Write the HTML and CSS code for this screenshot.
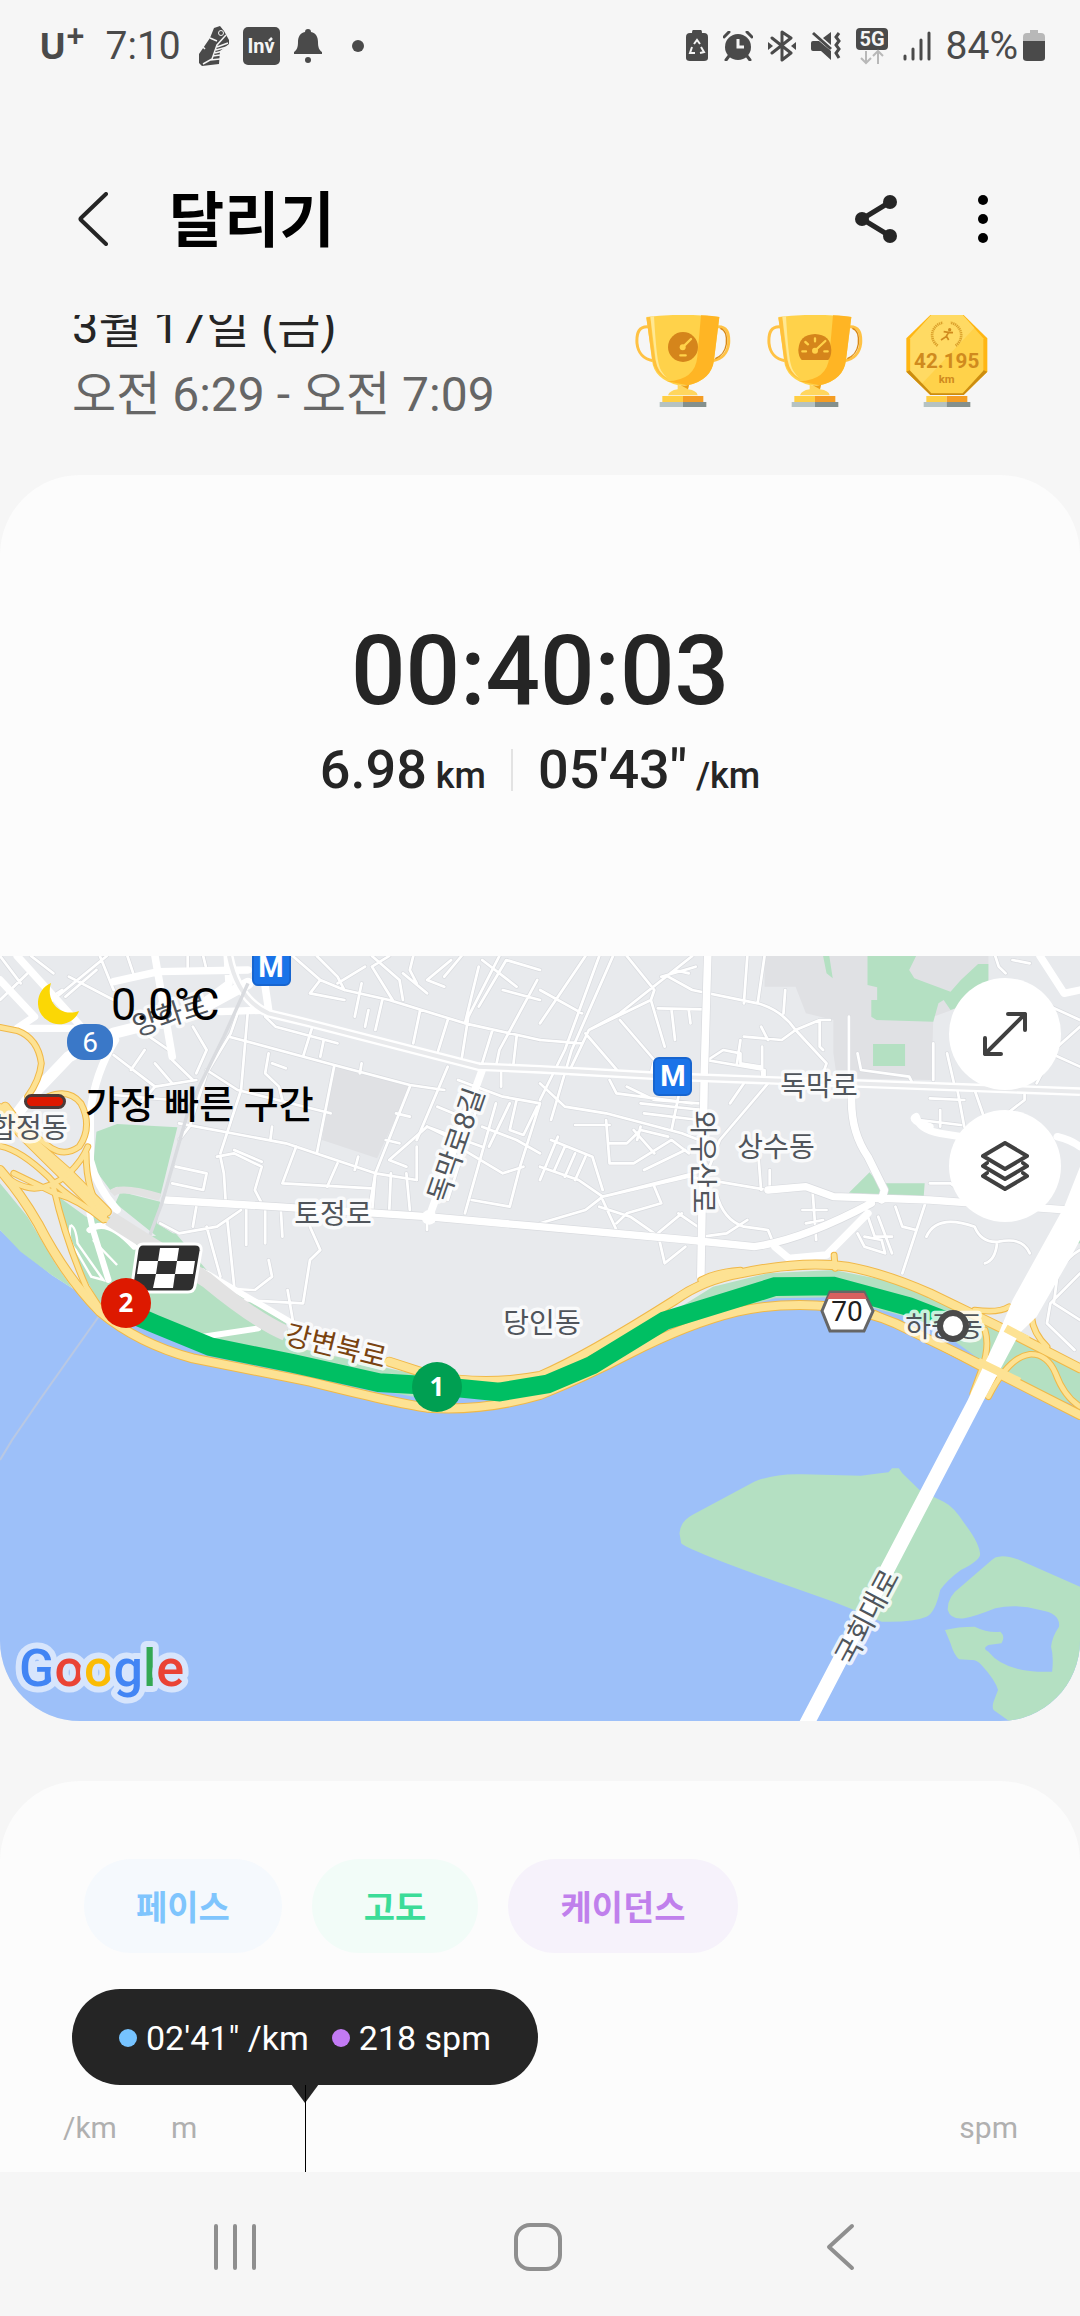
FILE: index.html
```html
<!DOCTYPE html>
<html lang="ko">
<head>
<meta charset="utf-8">
<meta name="viewport" content="width=device-width, initial-scale=1">
<title>달리기</title>
<link rel="stylesheet" href="styles.css">
</head>
<body>
<div class="status-bar">
  <div class="status-group status-left">
    <span class="carrier">U<sup class="carrier-plus">+</sup></span>
    <span class="status-text clock">7:10</span>
    <svg class="icon" width="32" height="40" viewBox="0 0 32 40" aria-hidden="true">
      <path d="M1 28 L12 12 L16 2 L22 0 L26 5 L31 14 L31 18 L22 25 L21 38 L4 40 L1 37Z" fill="#4a4a4a"/>
      <path d="M28 9 L19 19 L14 33 L5 38 M30 17 L19 21 M29 21 L18 24 M25 25 L17 27 M22 29 L15 30 M22 33 L12 34 M3 19 L7 23 M12 12 L19 15" fill="none" stroke="#f5f5f5" stroke-width="1.5"/>
      <circle cx="23" cy="7" r="2.500" fill="none" stroke="#f5f5f5"/>
    </svg>
    <svg class="icon" width="37" height="38" viewBox="0 0 37 38" role="img" aria-label="Inv">
      <rect width="37" height="38" rx="5" fill="#4a4a4a"/>
      <text x="18" y="26" class="inv">Inv</text>
      <path d="M26 14 l3 -3" stroke="#f5f5f5" stroke-width="2.500"/>
    </svg>
    <svg class="icon" width="30" height="34" viewBox="0 0 30 34" aria-hidden="true">
      <path d="M15 0 C17 0 18 1 18 3 C23 4 25 8 25 13 C25 18 26 21 29 23 V25 H1 V23 C4 21 5 18 5 13 C5 8 7 4 12 3 C12 1 13 0 15 0Z" fill="#4a4a4a"/>
      <circle cx="15" cy="31" r="3" fill="#4a4a4a"/>
    </svg>
    <span class="more-dot"></span>
  </div>
  <div class="status-group status-right">
    <svg class="icon" width="22" height="32" viewBox="0 0 22 32" aria-hidden="true">
      <path d="M7 0 H15 Q16 0 16 3 H18 Q22 3 22 7 V28 Q22 31 18 31 H4 Q0 31 0 28 V7 Q0 3 4 3 H6 Q6 0 7 0Z" fill="#4a4a4a"/>
      <path d="M8 14 L11 10 L14 14 M15 17 L18 22 L14 23 M9 23 H4 L6 17" fill="none" stroke="#f5f5f5" stroke-width="2"/>
    </svg>
    <svg class="icon" width="30" height="30" viewBox="0 0 30 30" aria-hidden="true">
      <circle cx="15" cy="16" r="13" fill="#4a4a4a"/>
      <path d="M1 6 L6 1 M29 6 L24 1 M6 25 L3 29 M24 25 L27 29" stroke="#4a4a4a" stroke-width="3" stroke-linecap="round"/>
      <path d="M15 8 V16 H21" fill="none" stroke="#f5f5f5" stroke-width="3"/>
    </svg>
    <svg class="icon" width="28" height="32" viewBox="0 0 28 32" aria-hidden="true">
      <path d="M4 8 L23 23 L14 30 V2 L23 8 L4 23" fill="none" stroke="#4a4a4a" stroke-width="3" stroke-linejoin="round" stroke-linecap="round"/>
      <path d="M0 12 L5 16 L0 20Z M28 12 L23 16 L28 20Z" fill="#4a4a4a"/>
    </svg>
    <svg class="icon" width="30" height="30" viewBox="0 0 30 30" aria-hidden="true">
      <path d="M0 12 Q0 10 2 10 H8 L20 20 V29 L10 20 H2 Q0 20 0 18Z M20 1 V14 L12 7Z" fill="#4a4a4a"/>
      <path d="M2 2 L20 18 M28 2 L25 6 L28 10 L25 14 L28 18 L25 22 L28 27" fill="none" stroke="#4a4a4a" stroke-width="3"/>
    </svg>
    <svg class="icon" width="32" height="38" viewBox="0 0 32 38" role="img" aria-label="5G">
      <rect y="1" width="32" height="22" rx="4" fill="#4a4a4a"/>
      <text x="16" y="19" class="five-g">5G</text>
      <path d="M10 24 V36 M5 31 L10 36 L15 31 M22 37 V25 M17 29 L22 24 L27 29" fill="none" stroke="#b8b8b8" stroke-width="2"/>
    </svg>
    <svg class="icon" width="28" height="30" viewBox="0 0 28 30" aria-hidden="true">
      <path d="M2 25 V28 M10 18 V28 M18 9 V28 M26 2 V28" stroke="#4a4a4a" stroke-width="3" stroke-linecap="round"/>
    </svg>
    <span class="battery">
      <span class="status-text">84%</span>
      <svg class="icon" width="22" height="32" viewBox="0 0 22 32" aria-hidden="true">
        <path d="M7 0 H15 V3 H18 Q22 3 22 7 V12 H0 V7 Q0 3 4 3 H7Z" fill="#b8b8b8"/>
        <path d="M0 11 H22 V28 Q22 31 18 31 H4 Q0 31 0 28Z" fill="#4a4a4a"/>
      </svg>
    </span>
  </div>
</div>

<header class="app-bar">
  <button class="icon-button" aria-label="뒤로">
    <svg width="30" height="54" viewBox="0 0 30 54"><path d="M28 2 L3 26 Q2 27 3 28 L28 52" fill="none" stroke="#252525" stroke-width="4" stroke-linecap="round" stroke-linejoin="round"/></svg>
  </button>
  <h1 class="title">달리기</h1>
  <button class="icon-button share" aria-label="공유">
    <svg width="44" height="50" viewBox="0 0 44 50"><path d="M36 8 L8 25 L36 42" fill="none" stroke="#252525" stroke-width="5"/><circle cx="36" cy="8" r="7" fill="#252525"/><circle cx="8" cy="25" r="7" fill="#252525"/><circle cx="36" cy="42" r="7" fill="#252525"/></svg>
  </button>
  <button class="icon-button" aria-label="더보기">
    <svg width="10" height="50" viewBox="0 0 10 50"><circle cx="5" cy="6" r="5"/><circle cx="5" cy="25" r="5"/><circle cx="5" cy="44" r="5"/></svg>
  </button>
</header>

<main class="content">
  <section class="summary">
    <div class="when">
      <p class="date">3월 17일 (금)</p>
      <p class="time-range">오전 6:29 - 오전 7:09</p>
    </div>
    <div class="awards">
      <svg width="96" height="92" viewBox="104 495 288 276" role="img" aria-label="최고 기록">
        <defs>
          <g id="cup">
            <path d="M150 531 C115 525 108 550 110 580 C113 608 130 628 158 632 M345 531 C380 525 387 550 385 580 C382 608 365 628 337 632" fill="none" stroke="#ffc244" stroke-width="9"/>
            <path d="M360 535 C376 540 380 560 378 582 C374 608 362 618 345 626" fill="none" stroke="#d98914" stroke-width="4"/>
            <path d="M138 501 Q248 488 357 501 L341 630 Q334 690 262 706 Q248 708 234 706 Q160 688 155 630Z" fill="#ffd24a"/>
            <path d="M302 496 Q340 498 357 501 L341 630 Q334 690 262 706 L200 694 Q285 690 291 620Z" fill="#ffb524"/>
            <path d="M138 503 L150 500 Q160 620 168 640 Q175 670 205 690 Q162 670 156 630Z" fill="#ffc03c"/>
            <path d="M150 500 L161 499 Q168 620 176 645 Q180 665 200 683 Q172 668 166 630Z" fill="#ffe893"/>
            <path d="M232 704 Q248 710 266 704 L263 718 Q290 722 292 736 H203 Q207 722 232 718Z" fill="#ffd65e"/>
            <path d="M240 705 Q252 710 266 704 L263 718Z" fill="#eda018"/>
            <path d="M186 738 H248 V756 H186Z" fill="#ffce43"/><path d="M248 738 H309 V756 H248Z" fill="#f49d24"/>
            <path d="M178 756 H248 V771 H178Z" fill="#b5c2c2"/><path d="M248 756 H318 V771 H248Z" fill="#84908d"/>
          </g>
        </defs>
        <use href="#cup"/>
        <circle cx="248" cy="591" r="45" fill="#d5851b"/>
        <circle cx="247" cy="592" r="9" fill="#ffd24a"/>
        <path d="M249 590 L272 567 M240 616 H256" stroke="#ffd24a" stroke-width="7" stroke-linecap="round"/>
      </svg>
      <svg width="96" height="92" viewBox="104 495 288 276" role="img" aria-label="최고 속도">
        <use href="#cup"/>
        <path d="M208 630 Q198 618 198 600 Q200 554 248 552 Q295 554 297 600 Q297 618 288 630Z" fill="#d5851b"/>
        <circle cx="248" cy="602" r="9" fill="#ffd24a"/>
        <path d="M250 600 L279 573 M248 565 V574 M219 576 L227 583 M210 604 H221 M276 604 H286" stroke="#ffd24a" stroke-width="7" stroke-linecap="round"/>
      </svg>
      <svg width="96" height="92" viewBox="896 495 288 276" role="img" aria-label="42.195 km">
        <path d="M978 738 H1039 V756 H978Z" fill="#ffce43"/><path d="M1039 738 H1101 V756 H1039Z" fill="#f49d24"/>
        <path d="M970 756 H1039 V771 H970Z" fill="#b5c2c2"/><path d="M1039 756 H1110 V771 H1039Z" fill="#84908d"/>
        <path d="M990 495 H1090 L1161 565 V665 L1090 735 H990 L918 665 V565Z" fill="#ffb613"/>
        <path d="M918 665 L990 735 H1090 L1161 665 L1148 660 L1086 728 H994 L930 660Z" fill="#cc8d10"/>
        <path d="M993 495 H1087 L1149 565 V662 L1087 730 H993 L930 662 V565Z" fill="#ffd24a"/>
        <path d="M993 495 H1087 L1122 534 L966 700 L930 662 V565Z" fill="#ffda63"/>
        <path d="M1012 587 A38 38 0 0 1 1028 518 M1066 587 A38 38 0 0 0 1050 518" fill="none" stroke="#dba12c" stroke-width="8" stroke-dasharray="4 2"/>
        <path d="M1030 545 L1045 547 L1037 560 L1022 570 M1045 547 L1058 548 M1038 558 L1045 570" fill="none" stroke="#d08a1e" stroke-width="5"/>
        <circle cx="1048" cy="539" r="5" fill="#d08a1e"/>
        <text x="1039" y="654" class="award-number">42.195</text>
        <text x="1039" y="699" class="award-unit">km</text>
      </svg>
    </div>
  </section>

  <section class="card result">
    <div class="totals">
      <p class="duration">00:40:03</p>
      <p class="stats">
        <span class="stat">6.98<small class="unit"> km</small></span>
        <span class="divider"></span>
        <span class="stat">05'43"<small class="unit"> /km</small></span>
      </p>
    </div>
    <div class="map">
      <svg class="map-canvas" viewBox="0 0 1080 765" role="img" aria-label="달린 경로 지도">
        <defs>
          <g id="highways">
            <path d="M0 690 Q60 760 110 850 Q190 1010 290 1115 Q400 1210 560 1255 L900 1325 Q1150 1390 1240 1403 Q1400 1415 1568 1365 Q1700 1310 1830 1240 Q2000 1150 2140 1115 Q2270 1085 2420 1100 Q2520 1115 2600 1150 L2860 1280 L3136 1425"/>
            <path d="M1130 1265 L1250 1305 Q1400 1340 1568 1308 Q1700 1250 1960 1080 Q2040 1020 2150 1000 Q2330 960 2460 980 Q2568 1000 2700 1060 L2900 1160 L3136 1285"/>
            <path d="M0 505 L60 580 L300 825 M15 500 L90 600 L200 700 L310 815"/>
          </g>
          <g id="ramps">
            <path d="M0 262 L50 272 Q110 295 120 370 Q115 420 80 470 M140 470 Q200 445 235 490 Q270 560 230 620 Q190 650 150 625 L40 540"/>
            <path d="M0 618 Q60 630 140 710 Q180 760 310 840 M255 620 Q240 660 200 700 Q150 745 100 745 Q40 740 0 690 M250 640 Q250 760 300 820 M155 740 Q190 900 250 1040 L300 1120 M40 700 L160 760 Q230 780 300 840"/>
            <path d="M2425 985 L2422 945 M2035 1020 Q2080 995 2150 990 M2930 1100 Q2900 1120 2830 1110 M2860 1170 Q2875 1220 2850 1290 L2825 1360 M2870 1370 Q2930 1250 2990 1243 Q3040 1240 3065 1300 Q3090 1370 3136 1400 M2995 1130 Q3000 1180 3040 1220 M2540 1120 L2640 1170 L2860 1290"/>
          </g>
          <g id="minor">
            <path d="M0 180 L90 90 M90 48 L155 100 M130 200 L310 48 M190 170 L280 90 M200 110 L330 180 M290 48 L330 150 M370 48 L390 110 M545 48 V90 M590 48 L600 90 M0 48 L60 130 M120 190 L180 150"/>
            <path d="M330 345 L450 440 L570 420 M380 390 L420 330 M420 280 L490 330 M450 370 L500 430 M500 360 L560 420 M560 260 L600 330 L570 400 M690 220 L670 280 L600 400 L550 560 L520 600 M720 210 L700 450 L640 640 M770 230 L800 260 L980 310"/>
            <path d="M330 465 L500 480 M450 440 L400 500 M665 290 L970 375 L1190 435 L1290 450 M600 390 L690 450 L960 520 M780 340 L770 400 L810 440 L820 480 M790 370 L830 385 M520 550 L830 610 L1090 700 L1210 720 M970 380 L920 640 M1190 440 L1090 700 L1070 820 M1300 380 L1210 600 M910 250 L880 350 M940 300 L930 350 M1050 370 L1045 400"/>
            <path d="M850 48 L930 120 L1000 150 L1130 180 L1350 250 L1568 300 M920 48 L980 110 L1000 150 M1060 80 L980 130 M1130 48 L1080 80 L1140 180 M1080 48 L1160 120 L1170 180 M1200 48 L1190 90 L1210 130 M1310 60 L1240 120 L1290 140 M1340 48 L1290 110 M1390 80 L1350 250 M1450 48 L1360 230 L1340 360 M1568 90 L1470 60 L1390 200 M1568 180 L1460 150 M1560 120 L1450 330 L1440 380 M1000 180 L900 160 L930 120 M1050 130 L1030 230 M1070 210 L1060 260 M1110 180 L1090 270 M1220 210 L1200 310 M1300 240 L1270 340 M1430 270 L1400 370 M1500 290 L1490 380 M1170 100 L1240 160 M1400 60 L1500 140"/>
            <path d="M510 680 L600 700 L590 750 L500 730 M630 650 L680 640 L760 680 L740 750 L765 800 M680 630 L760 665 M860 620 L820 730 L1080 745 M980 670 L950 740 M640 650 L650 700 L655 780 M1090 700 L1080 820 M1135 700 L1130 820 M1180 700 L1190 810 M1240 560 L1130 660 L1180 680 M1120 600 L1160 610 M1150 520 L1190 530 M1210 620 L1210 720 M1040 650 L1030 690 M790 560 L785 600"/>
            <path d="M465 850 L520 880 L630 860 L700 810 M570 800 L560 860 M600 860 L640 1010 M660 840 L680 1040 M715 800 V915 M770 805 V910 M815 800 L820 890 M590 990 L700 1080 L880 1090 L900 960 L930 930 L900 860 M780 960 L790 1010 L740 1050 L640 1045 M835 1050 L850 1140 M1240 840 L1240 870"/>
            <path d="M1330 420 L1460 470 L1568 490 M1400 560 L1500 600 L1568 640 M1380 520 L1300 780 M1440 490 L1350 820 M1480 490 L1420 620 M1500 480 L1480 570 L1520 585 L1560 500 M1568 490 L1510 680 L1480 800 L1370 780 M1455 390 V440 M1270 500 L1340 530 M1330 620 L1460 700 L1520 680 M1240 560 L1400 620 M1240 560 L1300 590"/>
            <path d="M1568 250 L1700 48 M1568 480 L1640 330 L1740 48 M1600 540 L1660 330 L1780 48 M1568 150 L1690 220 M1568 300 L1690 310 M1650 400 L1710 270 L1800 220 L2010 48 M1710 270 L1890 180 L1900 150 L1820 48 M1800 240 L1900 360 L1890 400 M1700 280 L1800 400 M1890 180 L1930 320 M1910 205 L2040 208 M1940 110 L2010 150 L2200 190 Q2270 210 2310 270 L2400 370 L2390 400 M2020 80 L1920 110 M1960 90 L2000 100 M1950 210 L1960 300 M2000 210 L2005 250 M2220 48 L2200 190 M2170 48 L2160 190 M2280 150 L2275 220 M2310 270 L2380 240 H2410 M2380 240 L2380 320 L2390 330 M2465 230 V410 M2160 290 L2270 300 L2310 270 M2210 260 L2230 300 M2055 360 L2100 330 L2150 340 L2150 370 L2210 380 M2150 300 L2140 370 M2050 360 L2220 390 L2220 420 M2213 320 V410"/>
            <path d="M1568 430 L1640 500 L1760 520 L1980 580 L2030 600 M1770 420 L1790 460 L2010 490 M1820 440 L1900 480 L2030 490 M1860 490 L2040 510 M1870 520 L2030 540 M1970 470 L1950 570 M1760 540 L1770 670 L1840 670 L1950 600 L2000 640 M1670 555 L1770 555 M1770 610 H1820 L1860 570 L1940 590 M1860 560 L1850 600 M1870 690 L1990 630 M1840 570 L1900 640 M1568 720 L1620 590 M1568 680 L1680 720 L1750 770 L2050 690 M1600 600 L1720 650 L1750 750 M1640 620 L1610 690 M1670 640 L1640 710 M1700 650 L1670 720 M1568 850 L1700 810 L1750 770 L2000 710 L2230 750 M1750 780 L1790 870 M1740 800 L1830 830 L1900 880 M1900 740 L1920 790 L1820 820 L1790 850 M1980 820 L1910 880 L1930 970 L1990 920 M1970 820 L2040 870 M2080 760 Q2100 840 2160 860 L2230 870 L2250 920 M2040 890 L2110 880 L2170 840 M2200 620 L2210 750 M2235 690 V750 M2360 760 L2370 900 M2330 810 H2400 M2340 850 L2390 840 M2230 430 L2090 600 L2060 680 M2160 430 L2120 490"/>
            <path d="M2490 340 L2500 390 L2640 410 L2650 430 M2710 310 V420 M2750 340 L2770 430 M2890 48 L2900 80 L2920 100 M2940 60 L2990 70 M3136 380 L3050 340 M3010 430 L3060 330 L3136 260 M3030 190 L3136 240 M2700 475 L2800 480 M2780 450 L2800 560 M2830 450 L2860 540 M2975 460 V480 L2900 540 M2670 540 L2790 555 M2730 510 V560 M2690 780 L2620 1000 M2700 730 H2760 L2800 760 M2550 830 L2590 940 M2520 830 L2540 890 H2590 M2600 800 L2620 860 L2660 870 M2490 880 L2510 920 L2570 940 L2560 900 L2510 890 M2690 890 Q2720 820 2830 860 Q2850 910 2900 905 Q2970 890 2990 940 M2895 910 Q2890 960 2860 970 M3136 930 Q3080 960 3010 1100 M3136 1000 L3050 1090 L3040 1150 L3120 1230 M3070 1010 L3060 1090 L3136 1140"/>
          </g>
        </defs>
        <g transform="scale(.34439 .33333) translate(0 -48)">
          <path d="M0 0 H3136 V2343 H0Z" fill="#e8eaed"/>
          <path d="M970 378 L1190 440 L1095 655 L935 600Z M2220 48 H2870 V170 L2710 230 L2705 420 L2430 415 L2420 340 V240 L2340 220 L2310 140 L2220 140Z" fill="#e0e1e4"/>
          <path d="M0 870 L60 930 L150 1005 L210 1045 L300 1110 L430 1150 L620 1240 L830 1290 L1100 1350 L1450 1370 L1568 1350 L1730 1290 L1930 1150 L2250 1060 L2420 1060 L2700 1150 L2860 1250 L3136 1370 V2343 H0Z" fill="#9dc0f9"/>
          <g fill="#b4e0c2">
            <path d="M0 730 L80 830 L160 970 L210 1045 L150 1005 L60 935 L0 870Z"/>
            <path d="M170 770 L250 830 L330 830 L430 890 L510 880 L600 990 L830 1150 L850 1220 L1150 1290 L1300 1320 L1200 1370 L1100 1350 L620 1240 L430 1150 L300 1110 L240 1000 L190 860Z"/>
            <path d="M280 575 L340 552 L515 562 L465 770 L340 740 L320 750 L270 680Z M335 790 L350 755 L465 785 L455 850 L510 885 L480 910Z"/>
            <path d="M1900 1150 L2070 1040 L2230 1000 L2420 990 L2568 1020 L2850 1130 L3136 1300 V1400 L2940 1330 L2860 1270 L2700 1150 L2420 1072 L2250 1075 L1950 1160Z"/>
            <path d="M2519 48 H2660 L2640 90 L2655 115 L2760 155 L2790 120 L2840 72 H2870 V170 L2760 210 L2740 180 L2725 190 L2710 245 L2545 240 L2530 230 V180 H2547 V142 L2519 135Z M2535 312 H2628 V378 H2535Z M2390 48 H2408 L2418 115 L2400 100Z M2465 758 L2525 697 L2550 730 H2685 L2682 772Z M3136 860 L3120 910 H3136Z"/>
            <path d="M1973 1780 Q1975 1745 2010 1725 L2190 1625 Q2250 1600 2330 1603 L2500 1607 Q2560 1600 2580 1597 L2590 1585 L2610 1585 L2620 1600 L2670 1650 L2740 1685 Q2770 1700 2800 1750 Q2845 1810 2846 1845 Q2840 1865 2790 1890 Q2750 1920 2730 1950 Q2715 2020 2690 2030 Q2650 2048 2560 2045 L2480 2010 L2420 1985 L2200 1905 Q2000 1830 1978 1810Z"/>
            <path d="M2900 1850 Q2920 1845 2960 1860 L3136 1940 V2343 H2930 L2885 2310 Q2880 2300 2885 2285 L2898 2250 Q2890 2220 2850 2175 Q2835 2158 2820 2160 L2785 2158 Q2770 2145 2760 2110 L2744 2070 Q2780 2060 2830 2060 Q2870 2080 2905 2075 Q2920 2090 2908 2110 L2870 2115 Q2850 2125 2870 2135 Q2920 2200 3055 2195 Q3060 2150 3052 2120 Q3055 2090 3075 2060 Q3080 2020 3020 2010 Q2950 1990 2890 2005 Q2830 2030 2800 2035 Q2760 2040 2752 2010 Q2750 1970 2790 1940 L2880 1860 Q2890 1850 2900 1850Z"/>
          </g>
          <use href="#minor" class="minor-edge"/>
          <use href="#minor" class="minor-road"/>
          <path class="major-edge" d="M480 780 L800 800 L1240 830 L1568 860 L2000 900 L2190 920 Q2330 900 2530 790 M2055 48 L2045 400 L2035 1010 M2476 430 Q2460 560 2520 650 L2568 750 L2560 780 M2230 750 L2340 740 L2420 770 L2700 780 L3100 810"/>
          <g class="major-road">
            <path d="M0 590 L80 480 L200 350 L330 280 L560 220 L720 130" stroke-width="34"/>
            <path d="M50 48 L240 265 H50 L100 230 L0 120 M330 125 L460 95 L720 90 M450 48 L500 350 M660 48 L665 130 L600 180 M770 140 L780 210 L640 215 M335 300 Q275 400 262 520 L262 660 Q280 740 340 810"/>
            <path d="M480 780 L800 800 L1240 830 L1568 860 L2000 900 L2190 920 Q2330 900 2530 790 M1400 390 L1250 820 M2055 48 L2045 400 L2035 1010 M2476 430 Q2460 560 2520 650 L2568 750 L2560 780 M2230 750 L2340 740 L2420 770 L2700 780 L3100 810 M2250 920 L2290 955 L2400 945 L2520 820 M3020 48 L3090 160 L3136 150 M2700 560 Q2640 540 2660 530 Q2670 570 2730 580 L2790 590 M3070 590 Q3110 600 3136 620"/>
            <path d="M260 820 L270 870 L315 1020 M260 870 Q310 830 390 920 M590 1190 L750 1165 M600 1000 L850 1150" stroke-width="18"/>
            <circle cx="1246" cy="832" r="22" fill="#fff" stroke="none"/>
          </g>
          <path d="M205 855 Q195 900 220 930 L265 1010 L300 1020 L225 910 Q220 860 205 855 M270 900 L340 975" fill="none" stroke="#fff" stroke-width="7"/>
          <path d="M665 48 Q690 180 780 220 L900 250 L1390 380 L1568 388 L1950 410 L3136 455" fill="none" stroke="#fff" stroke-width="26"/>
          <path d="M665 48 Q690 180 780 220 L900 250 L1390 380 L1568 388 L1950 410 L3136 455" fill="none" stroke="#e9eaec" stroke-width="12"/>
          <path d="M720 130 L650 290 L550 500 L470 790 L430 900" fill="none" stroke="#d9dbdf" stroke-width="10"/>
          <path d="M325 760 Q350 735 465 772" fill="none" stroke="#e2e2e2" stroke-width="22"/>
          <path d="M300 1110 L115 1380 L35 1500 L0 1560" fill="none" stroke="#b9c8e3" stroke-width="6"/>
          <use href="#highways" class="highway-edge"/>
          <use href="#ramps" class="ramp-edge"/>
          <use href="#highways" class="highway"/>
          <use href="#ramps" class="ramp"/>
          <path d="M318 835 L600 1020 Q740 1140 830 1180" fill="none" stroke="#e2e2e2" stroke-width="46"/>
          <path d="M2322 2343 L2810 1380 L2900 1180 L2940 1080 L3090 800 L3136 680 V900 L3110 950 L3010 1130 L2960 1180 L2857 1380 L2371 2343Z" fill="#fff"/>
          <path d="M2840 1265 L2960 1325 M2920 1165 L2985 1200" stroke="#fde293" stroke-width="24"/>
          <path d="M400 1130 L450 1152 L610 1220 L850 1270 L1100 1328 L1270 1338 L1450 1356 L1590 1332 L1720 1275 L1930 1142 L2250 1040 L2420 1038 L2640 1100 L2766 1150" fill="none" stroke="#00bf63" stroke-width="56"/>
        </g>
        <g class="map-labels">
          <text transform="translate(170 59) rotate(-18)" y="10">양화로</text>
          <text x="29" y="182">합정동</text>
          <text transform="translate(456 189) rotate(-71)" y="10">독막로8길</text>
          <text x="333" y="268">토정로</text>
          <text x="542" y="377">당인동</text>
          <text x="776" y="201">상수동</text>
          <text x="819" y="140">독막로</text>
          <text transform="translate(703 206) rotate(90)" y="10">와우산로</text>
          <text x="944" y="381">하중동</text>
          <text transform="translate(867 661) rotate(-62)" y="10">국회대로</text>
          <text class="highway-name" transform="translate(336 390) rotate(14)" y="10">강변북로</text>
        </g>
        <g class="station">
          <rect x="253" y="-8" width="37" height="37" rx="5"/><text x="271" y="21">M</text>
          <rect x="654" y="102" width="37" height="37" rx="5"/><text x="673" y="130">M</text>
        </g>
        <rect x="67" y="68" width="46" height="36" rx="17" fill="#3a78c8"/>
        <text class="shield-light" x="90" y="96">6</text>
        <path d="M830 336 H864 L873 355 L864 375 H830 L822 355Z" fill="#fff" stroke="#666" stroke-width="3"/>
        <path d="M830 337 H864 L867 343 H827Z" fill="#d76060"/>
        <text class="shield-dark" x="847" y="365">70</text>
        <path d="M143 288 H195 Q202 288 201 295 L195 330 Q194 336 188 336 H139 Q131 336 132 329 L137 294 Q138 288 143 288Z" fill="#2f2f2f" stroke="#fff" stroke-width="3"/>
        <path d="M160 292 H179 L177 305 H158Z M139 305 H158 L156 318 H137Z M177 305 H195 L193 318 H175Z M156 318 H175 L173 332 H153Z" fill="#fff"/>
        <g class="pin">
          <circle cx="126" cy="347" r="25" fill="#dd1900"/><text x="126" y="356">2</text>
          <circle cx="437" cy="431" r="25" fill="#009f52"/><text x="437" y="440">1</text>
        </g>
        <circle cx="953" cy="370" r="13" fill="#fff" stroke="#4a4a4a" stroke-width="6"/>
        <text class="google" x="19" y="730"><tspan class="g-blue">G</tspan><tspan class="g-red">o</tspan><tspan class="g-yellow">o</tspan><tspan class="g-blue">g</tspan><tspan class="g-green">l</tspan><tspan class="g-red">e</tspan></text>
      </svg>
      <div class="legend">
        <p class="legend-row weather">
          <svg width="42" height="42" viewBox="0 0 42 42" aria-hidden="true"><path d="M13 0 C-2 6 -5 28 9 37 C20 46 37 40 41 28 C30 32 20 28 15 20 C11 13 11 6 13 0Z" fill="#fbd705"/></svg>
          <span class="temperature">0.0°C</span>
        </p>
        <p class="legend-row fastest"><span class="swatch"></span>가장 빠른 구간</p>
      </div>
      <div class="map-buttons">
        <button class="round-button" aria-label="지도 확대">
          <svg width="44" height="44" viewBox="0 0 44 44"><path d="M2 42 L42 2 M25 2 H42 V18 M2 26 V42 H18" fill="none" stroke="#404040" stroke-width="4" stroke-linecap="round" stroke-linejoin="round"/></svg>
        </button>
        <button class="round-button" aria-label="지도 유형">
          <svg width="48" height="50" viewBox="0 0 48 50"><path d="M24 2 L46 15 L24 28 L2 15Z M6 22 L2 25 L24 38 L46 25 L42 22 M6 32 L2 35 L24 48 L46 35 L42 32" fill="none" stroke="#404040" stroke-width="4" stroke-linejoin="round" stroke-linecap="round"/></svg>
        </button>
      </div>
    </div>
  </section>

  <section class="card graphs">
    <div class="pills">
      <button class="pill pace">페이스</button>
      <button class="pill altitude">고도</button>
      <button class="pill cadence">케이던스</button>
    </div>
    <div class="chart">
      <div class="tooltip">
        <span class="reading pace-reading">02'41" /km</span>
        <span class="reading cadence-reading">218 spm</span>
      </div>
      <div class="axis">
        <span class="axis-pace">/km</span>
        <span>m</span>
        <span class="axis-cadence">spm</span>
      </div>
    </div>
  </section>
</main>

<nav class="nav-bar">
  <button class="nav-button" aria-label="최근 앱">
    <svg width="48" height="48" viewBox="0 0 48 48"><path d="M5 3 V45 M24 3 V45 M43 3 V45" stroke="#8f8f8f" stroke-width="4" stroke-linecap="round"/></svg>
  </button>
  <button class="nav-button" aria-label="홈">
    <svg width="48" height="48" viewBox="0 0 48 48"><rect x="2" y="2" width="44" height="44" rx="14" fill="none" stroke="#8f8f8f" stroke-width="4"/></svg>
  </button>
  <button class="nav-button" aria-label="뒤로 가기">
    <svg width="48" height="48" viewBox="0 0 48 48"><path d="M35 3 L12 24 L35 45" fill="none" stroke="#8f8f8f" stroke-width="4" stroke-linecap="round" stroke-linejoin="round"/></svg>
  </button>
</nav>
</body>
</html>
```
FILE: styles.css
```css
* {
  box-sizing: border-box;
}

body {
  margin: 0;
  min-height: 100vh;
  display: flex;
  flex-direction: column;
  background: #f6f6f6;
  color: #252525;
  font-family: Roboto, "Noto Sans CJK KR", sans-serif;
}

p,
h1 {
  margin: 0;
}

button {
  padding: 0;
  border: 0;
  background: none;
  font: inherit;
  color: inherit;
}

svg {
  display: block;
  flex: none;
}

/* Status bar */
.status-bar {
  height: 92px;
  padding: 0 35px 0 39px;
  display: flex;
  align-items: center;
  justify-content: space-between;
  color: #4a4a4a;
}

.status-group {
  display: flex;
  align-items: center;
}

.status-left {
  gap: 13px;
}

.status-right {
  gap: 15px;
}

.carrier {
  font: 700 36px/40px "Open Sans", sans-serif;
  display: flex;
}

.carrier-plus {
  font-size: 32px;
  line-height: 20px;
}

.status-text {
  font-size: 39px;
  line-height: 48px;
}

.clock {
  margin: 0 4px 0 8px;
}

.inv {
  font: 700 20px Roboto, sans-serif;
  fill: #f5f5f5;
  text-anchor: middle;
}

.five-g {
  font: 700 20px Roboto, sans-serif;
  fill: #f5f5f5;
  text-anchor: middle;
}

.more-dot {
  width: 12px;
  height: 12px;
  margin-left: 16px;
  border-radius: 50%;
  background: #4a4a4a;
}

.battery {
  display: flex;
  align-items: center;
  gap: 5px;
}

/* App bar */
.app-bar {
  height: 223px;
  padding: 31px 92px 0 78px;
  display: flex;
  align-items: center;
}

.title {
  flex: 1;
  margin-left: 61px;
  padding-top: 6px;
  font-size: 60px;
  line-height: 80px;
  font-weight: 700;
  color: #000;
}

.share {
  margin-right: 80px;
}

/* Date and awards, scrolled under the app bar */
.content {
  flex: 1;
  display: flex;
  flex-direction: column;
}

.summary {
  height: 160px;
  padding: 0 85px 0 72px;
  display: flex;
  justify-content: space-between;
  overflow: hidden;
}

.when {
  margin-top: -22px;
  white-space: nowrap;
}

.date {
  font-size: 47px;
  line-height: 68px;
}

.time-range {
  font-size: 48px;
  line-height: 68px;
  color: #666;
}

.awards {
  display: flex;
  gap: 36px;
}

.award-number {
  font: 700 62px Roboto, sans-serif;
  fill: #d08a1e;
  text-anchor: middle;
}

.award-unit {
  font: 700 34px Roboto, sans-serif;
  fill: #d08a1e;
  text-anchor: middle;
}

/* Cards */
.card {
  background: #fcfcfc;
  border-radius: 80px;
  overflow: hidden;
}

.totals {
  padding: 136px 0 148px;
  display: flex;
  flex-direction: column;
  align-items: center;
  font-weight: 500;
}

.duration {
  font-size: 96px;
  line-height: 120px;
}

.stats {
  height: 77px;
  display: flex;
  align-items: center;
  font-size: 54px;
}

.unit {
  font-size: 36px;
}

.divider {
  width: 2px;
  height: 42px;
  margin: 0 25px;
  background: #e3e3e3;
}

/* Map */
.map {
  position: relative;
}

.map-canvas {
  width: 100%;
  height: auto;
}

.minor-edge,
.minor-road,
.major-edge,
.major-road,
.highway-edge,
.highway,
.ramp-edge,
.ramp {
  fill: none;
  stroke-linecap: round;
  stroke-linejoin: round;
}

.minor-edge {
  stroke: #d9dbdf;
  stroke-width: 12px;
}

.minor-road {
  stroke: #fff;
  stroke-width: 8px;
}

.major-edge {
  stroke: #d9dbdf;
  stroke-width: 26px;
}

.major-road {
  stroke: #fff;
  stroke-width: 22px;
}

.highway-edge {
  stroke: #f0b848;
  stroke-width: 30px;
}

.highway {
  stroke: #fde293;
  stroke-width: 24px;
}

.ramp-edge {
  stroke: #f0b848;
  stroke-width: 20px;
}

.ramp {
  stroke: #fde293;
  stroke-width: 14px;
}

.map-labels {
  font-size: 28px;
  fill: #50555b;
  text-anchor: middle;
  stroke: rgba(255, 255, 255, 0.8);
  stroke-width: 7px;
  stroke-linejoin: round;
  paint-order: stroke;
}

.highway-name {
  fill: #7a4310;
}

.station {
  font-size: 29px;
  font-weight: 700;
  text-anchor: middle;
}

.station rect {
  fill: #1a73e8;
  stroke: #1765cf;
  stroke-width: 2px;
}

.station text {
  fill: #fff;
}

.shield-light,
.shield-dark {
  font-size: 28px;
  text-anchor: middle;
}

.shield-light {
  fill: #fff;
}

.shield-dark {
  fill: #202020;
}

.pin {
  font: 700 26px "Open Sans", sans-serif;
  text-anchor: middle;
}

.pin text {
  fill: #fff;
}

.google {
  font: 500 52px Roboto, sans-serif;
  paint-order: stroke;
  stroke: #d7e5fc;
  stroke-width: 12px;
  stroke-linejoin: round;
}

.g-blue {
  fill: #4285f4;
}

.g-red {
  fill: #ea4335;
}

.g-yellow {
  fill: #fbbc05;
}

.g-green {
  fill: #34a853;
}

.legend {
  position: absolute;
  left: 24px;
  top: 18px;
  color: #000;
}

.legend-row {
  display: flex;
  align-items: center;
}

.weather {
  height: 60px;
  padding-left: 14px;
  gap: 31px;
  font-size: 45px;
}

.fastest {
  height: 60px;
  margin-top: 37px;
  gap: 19px;
  font-size: 38px;
  font-weight: 500;
}

.swatch {
  width: 42px;
  height: 15px;
  border: 3px solid #4b3a38;
  border-radius: 8px;
  background: #dd1900;
}

.map-buttons {
  position: absolute;
  top: 22px;
  right: 19px;
  display: flex;
  flex-direction: column;
  gap: 20px;
}

.round-button {
  width: 112px;
  height: 112px;
  border-radius: 50%;
  background: #fff;
  display: flex;
  align-items: center;
  justify-content: center;
}

/* Graphs */
.graphs {
  flex: 1;
  margin-top: 60px;
  padding-top: 78px;
  border-radius: 80px 80px 0 0;
  display: flex;
  flex-direction: column;
}

.pills {
  padding-left: 84px;
  display: flex;
  gap: 30px;
}

.pill {
  height: 94px;
  padding: 0 52px 2px;
  border-radius: 47px;
  font-size: 34px;
  font-weight: 700;
}

.pace {
  background: #f5f9fd;
  color: #7fc5fd;
}

.altitude {
  background: #f2fcf8;
  color: #3bdc98;
}

.cadence {
  background: #f6f2fb;
  color: #c080ec;
}

.chart {
  position: relative;
  flex: 1;
  margin-top: 36px;
  padding: 0 62px 24px 63px;
}

.chart::before {
  content: "";
  position: absolute;
  left: 291px;
  top: 95px;
  border: 14px solid transparent;
  border-top: 19px solid #252525;
  border-bottom: 0;
}

.chart::after {
  content: "";
  position: absolute;
  left: 305px;
  top: 96px;
  bottom: 0;
  width: 1px;
  background: #000;
}

.tooltip {
  width: max-content;
  height: 96px;
  margin-left: 9px;
  padding: 2px 47px 0;
  border-radius: 48px;
  background: #252525;
  color: #fff;
  font-size: 34px;
  display: flex;
  align-items: center;
  gap: 23px;
}

.reading {
  display: flex;
  align-items: center;
  gap: 9px;
}

.reading::before {
  content: "";
  width: 18px;
  height: 18px;
  border-radius: 50%;
}

.pace-reading::before {
  background: #76c3ff;
}

.cadence-reading::before {
  background: #c27af4;
}

.axis {
  margin-top: 23px;
  display: flex;
  font-size: 30px;
  line-height: 40px;
  color: #b0b0b0;
}

.axis-pace {
  width: 108px;
}

.axis-cadence {
  margin-left: auto;
}

/* System navigation */
.nav-bar {
  height: 144px;
  padding: 5px 215px 0 211px;
  display: flex;
  align-items: center;
  justify-content: space-between;
}

.nav-button {
  height: 60px;
  display: flex;
  align-items: center;
}
```
